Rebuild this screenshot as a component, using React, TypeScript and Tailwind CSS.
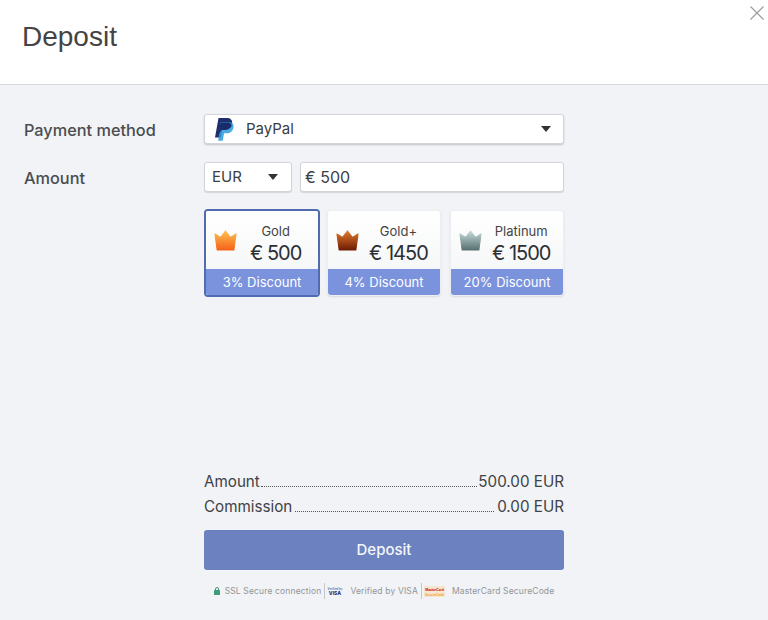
const Caret = () => (
  <svg width="12" height="6" viewBox="0 0 12 6">
    <path d="M1 0h10L6 6z" fill="#2f3338" />
  </svg>
);

const Crown = ({ from, to }: { from: string; to: string }) => (
  <svg width="23" height="21" viewBox="0 0 23 21">
    <defs>
      <linearGradient id={from} x1="0" y1="0" x2="0" y2="1">
        <stop offset="0" stopColor={from} />
        <stop offset="1" stopColor={to} />
      </linearGradient>
    </defs>
    <path
      d="M1 4 6.500 7.500 11.500 1 16.500 7.500 22 4 19.800 20H3.200z"
      fill={`url(#${from})`}
      stroke={`url(#${from})`}
      strokeWidth="1.200"
      strokeLinejoin="round"
    />
  </svg>
);

const plans = [
  { name: "Gold", price: "€ 500", discount: "3% Discount", from: "#ffc04f", to: "#f4621a", box: "w-[116px] h-[88px] border-2 border-[#4f6cae]", gap: "gap-[13px]" },
  { name: "Gold+", price: "€ 1450", discount: "4% Discount", from: "#e0782a", to: "#6e1c04", box: "w-[114px] h-[86px] mt-px ml-[7px] border border-[#eceef1] shadow-[0_1px_2px_rgba(0,0,0,0.1)]", gap: "gap-[10px]" },
  { name: "Platinum", price: "€ 1500", discount: "20% Discount", from: "#c6dcdc", to: "#58706f", box: "w-[114px] h-[86px] mt-px ml-auto border border-[#eceef1] shadow-[0_1px_2px_rgba(0,0,0,0.1)]", gap: "gap-[10px]" },
];

export default function App() {
  return (
    <div className="relative w-[768px] h-[620px] flex flex-col bg-[#f1f3f6] overflow-hidden font-['Inter',sans-serif] text-[#3c4043]">
      <header className="h-[85px] shrink-0 bg-white border-b border-[#d5d8dc] pl-[22px] pt-[20px]">
        <h1 className="font-['Liberation_Sans',sans-serif] text-[28px] leading-[34px] text-[#444]">Deposit</h1>
      </header>
      <button className="absolute top-[6px] right-[4px]" aria-label="close">
        <svg width="14" height="14" viewBox="0 0 14 14" stroke="#9a9da0" strokeWidth="1.2">
          <path d="M0.5 0.5 13.5 13.5M13.5 0.5 0.5 13.5" />
        </svg>
      </button>

      <main className="flex pl-6 pt-[29px]">
        <div className="w-[180px] shrink-0 pt-px text-[16.3px] font-medium text-[#4a4d50]">
          <p className="h-[48px] leading-[30px]">Payment method</p>
          <p className="leading-[30px]">Amount</p>
        </div>

        <div className="w-[360px] flex flex-col">
          <div className="h-[30px] flex items-center bg-white rounded-[3px] border border-[#d3d5d8] shadow-[0_1px_2px_rgba(0,0,0,0.2)] pl-[10px] pr-[11px]">
            <svg width="19" height="23" viewBox="0 0 19 23">
              <path d="M3.5 0h8c4 0 6.2 2 5.6 5.6-.7 4.3-3.4 6.4-7.4 6.4H7l-1.2 7.5H0z" fill="#1f2f6e" />
              <path d="M5.5 4h8c3.5 0 5.6 1.8 5 5.2-.7 4-3.2 6-7 6H9l-1.2 7.5H3.2z" fill="#2a9bdc" opacity="0.85" />
              <path d="M6.6 12H9.7c3 0 5.5-1.300 6.800-3.900C16.300 6 15 5 13.500 4.600H5.500L3.700 16z" fill="#1b2a6b" />
            </svg>
            <span className="ml-[12px] text-[15px]">PayPal</span>
            <span className="ml-auto flex"><Caret /></span>
          </div>

          <div className="flex gap-2 mt-[18px]">
            <div className="w-[88px] h-[30px] flex items-center justify-between bg-white rounded-[3px] border border-[#d3d5d8] shadow-[0_1px_1px_rgba(0,0,0,0.12)] pl-[7px] pr-3 text-[15px]">
              EUR
              <Caret />
            </div>
            <div className="flex-1 h-[30px] flex items-center bg-white rounded-[3px] border border-[#d3d5d8] shadow-[0_1px_1px_rgba(0,0,0,0.12)] pl-1 text-[16px]">
              € 500
            </div>
          </div>

          <div className="flex mt-[17px] items-start">
            {plans.map((p) => (
              <div key={p.name} className={`${p.box} flex flex-col rounded-[4px] overflow-hidden bg-white`}>
                <div className="flex-1 flex items-center pl-2 bg-gradient-to-b from-white to-[#f6f7f8]">
                  <div className={`flex items-center ${p.gap}`}>
                    <Crown from={p.from} to={p.to} />
                    <div className="flex flex-col items-center pt-[8px]">
                      <span className="text-[13px] leading-[18px] text-[#444]">{p.name}</span>
                      <span className="text-[20px] leading-[27px] tracking-[-1px] text-[#2c2f33]">{p.price}</span>
                    </div>
                  </div>
                </div>
                <div className="h-[26px] shrink-0 pt-px flex items-center justify-center bg-[#7b93dd] text-[13px] text-white">
                  {p.discount}
                </div>
              </div>
            ))}
          </div>

          <div className="mt-[172px] flex items-baseline text-[15.2px] leading-[25px] text-[#3f4245]">
            Amount
            <span className="flex-1 mx-px border-b border-dotted border-[#555]" />
            500.00 EUR
          </div>
          <div className="flex items-baseline text-[15.2px] leading-[25px] text-[#3f4245]">
            Commission
            <span className="flex-1 mx-[3px] border-b border-dotted border-[#555]" />
            0.00 EUR
          </div>

          <button className="mt-[11px] h-10 pt-px rounded-[3px] bg-[#6c81bf] text-[15px] font-medium text-[#f4f6fb]">
            Deposit
          </button>

          <div className="mt-[13px] flex items-center justify-center text-[8.5px] tracking-[0.15px] text-[#93969a] h-4">
            <svg width="6" height="8" viewBox="0 0 6 8" className="mr-[5px]">
              <path d="M1.500 3.500V2a1.500 1.500 0 0 1 3 0v1.500" fill="none" stroke="#3f9a78" />
              <rect y="3" width="6" height="5" rx="0.500" fill="#3f9a78" />
            </svg>
            <span>SSL Secure connection</span>
            <span className="ml-[3px] mr-px h-4 w-px bg-[#c4c6c9]" />
            <svg width="16" height="10" viewBox="0 0 16 10" className="mx-[1px]">
              <text x="8" y="4" textAnchor="middle" fontSize="2.800" fontWeight="700" letterSpacing="0" fill="#6a7bc0">Verified by</text>
              <text x="8" y="9" textAnchor="middle" fontSize="5" fontWeight="800" letterSpacing="0" fill="#26337a">VISA</text>
            </svg>
            <span className="ml-[6px]">Verified by VISA</span>
            <span className="ml-[3px] mr-px h-4 w-px bg-[#c4c6c9]" />
            <svg width="21" height="11" viewBox="0 0 21 11" className="mx-[1px]">
              <rect width="21" height="11" fill="#f6e6cf" />
              <text x="10.500" y="4.500" textAnchor="middle" fontSize="3.200" fontWeight="800" letterSpacing="0" fill="#d2352f">MasterCard</text>
              <text x="10.500" y="9.500" textAnchor="middle" fontSize="3.200" fontWeight="700" letterSpacing="0" fill="#efa63f">SecureCode</text>
            </svg>
            <span className="ml-[6px]">MasterCard SecureCode</span>
          </div>
        </div>
      </main>
    </div>
  );
}
